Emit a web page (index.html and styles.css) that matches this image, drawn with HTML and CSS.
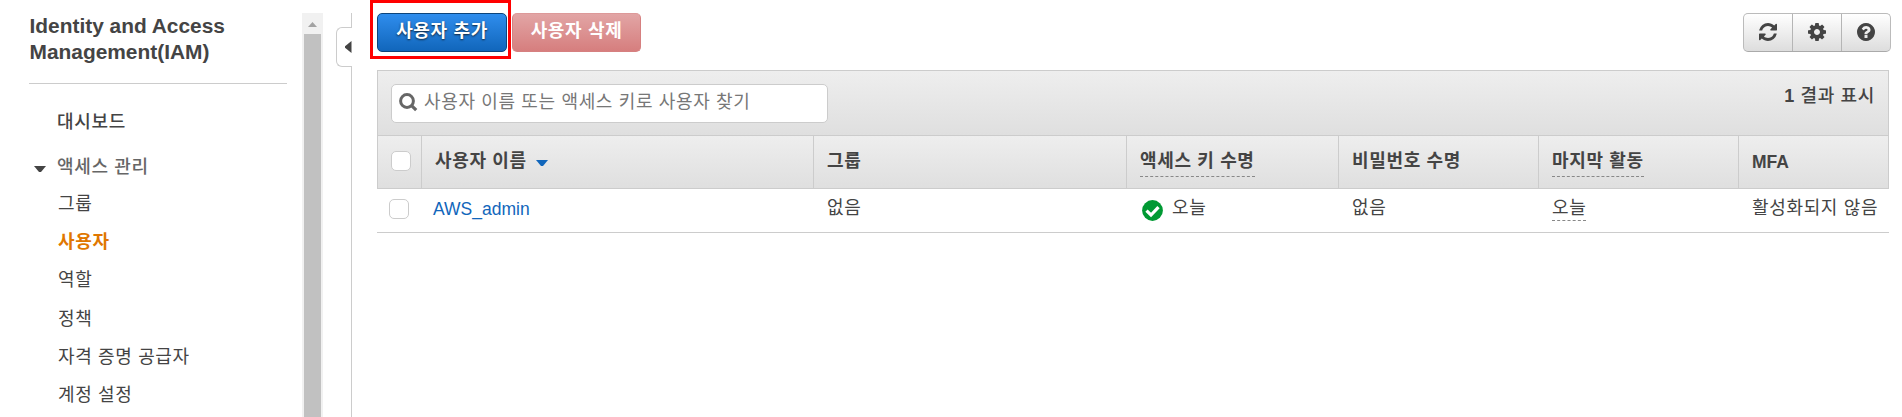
FILE: index.html
```html
<!DOCTYPE html>
<html lang="ko">
<head>
<meta charset="utf-8">
<title>IAM</title>
<link rel="stylesheet" href="styles.css">
</head>
<body>
<div class="app">
  <aside class="sidebar">
    <h1 class="title">Identity and Access Management(IAM)</h1>
    <nav class="nav">
      <a class="dash">대시보드</a>
      <div class="group"><svg class="caret" width="12" height="6" viewBox="0 0 12 6"><path d="M0 0H12L7 6H5Z" fill="#444"/></svg>액세스 관리</div>
      <a class="item">그룹</a>
      <a class="item active">사용자</a>
      <a class="item">역할</a>
      <a class="item">정책</a>
      <a class="item">자격 증명 공급자</a>
      <a class="item">계정 설정</a>
    </nav>
  </aside>
  <div class="scroll">
    <svg width="21" height="21" viewBox="0 0 21 21"><path d="M6 14L10.500 9L15 14Z" fill="#a3a3a3"/></svg>
    <div class="thumb"></div>
  </div>
  <div class="divider">
    <div class="line-top"></div>
    <div class="tab"><svg width="7" height="12" viewBox="0 0 7 12"><path d="M6.500 0V12L0 6.800V5.200Z" fill="#444"/></svg></div>
    <div class="line"></div>
  </div>
  <main class="main">
    <div class="actions">
      <button class="btn primary">사용자 추가<span class="highlight"></span></button>
      <button class="btn danger">사용자 삭제</button>
      <div class="tools">
        <span class="tool"><svg width="18" height="18" viewBox="0 0 1536 1536"><path fill="#444" d="M1511 928q0 5-1 7-64 268-268 434.500T764 1536q-146 0-282.500-55T238 1324l-129 129q-19 19-45 19t-45-19-19-45V960q0-26 19-45t45-19h448q26 0 45 19t19 45-19 45l-137 137q71 66 161 102t187 36q134 0 250-65t186-179q11-17 53-117 8-23 30-23h192q13 0 22.500 9.500t9.500 22.500zm25-800v448q0 26-19 45t-45 19h-448q-26 0-45-19t-19-45 19-45l138-138Q969 256 768 256q-134 0-250 65T332 500q-11 17-53 117-8 23-30 23H50q-13 0-22.500-9.500T18 608v-7q65-268 270-434.500T768 0q146 0 284 55.500T1297 212l130-129q19-19 45-19t45 19 19 45z"/></svg></span>
        <span class="tool"><svg width="18" height="18" viewBox="0 0 1536 1536"><path fill="#444" d="M1024 768q0-106-75-181t-181-75-181 75-75 181 75 181 181 75 181-75 75-181zm512-109v222q0 12-8 23t-20 13l-185 28q-19 54-39 91 35 50 107 138 10 12 10 25t-9 23q-27 37-99 108t-94 71q-12 0-26-9l-138-108q-44 23-91 38-16 136-29 186-7 28-36 28H657q-14 0-24.500-8.500T621 1506l-28-184q-49-16-90-37l-141 107q-10 9-25 9-14 0-25-11-126-114-165-168-7-10-7-23 0-12 8-23 15-21 51-66.500t54-70.500q-27-50-41-99L29 913q-13-2-21-12.500T0 877V655q0-12 8-23t19-13l186-28q14-46 39-92-40-57-107-138-10-12-10-24 0-10 9-23 26-36 98.500-107.500T337 135q13 0 26 10l138 107q44-23 91-38 16-136 29-186 7-28 36-28h222q14 0 24.500 8.500T915 30l28 184q49 16 90 37l142-107q9-9 24-9 13 0 25 10 129 119 165 170 7 8 7 22 0 12-8 23-15 21-51 66.500t-54 70.500q26 50 41 98l183 28q13 2 21 12.500t8 23.500z"/></svg></span>
        <span class="tool"><svg width="18" height="18" viewBox="0 0 1536 1536"><path fill="#444" d="M896 1248v-192q0-14-9-23t-23-9H672q-14 0-23 9t-9 23v192q0 14 9 23t23 9h192q14 0 23-9t9-23zm256-672q0-88-55.500-163T958 297t-170-41q-243 0-371 213-15 24 8 42l132 100q7 6 19 6 16 0 25-12 53-68 86-92 34-24 86-24 48 0 85.500 26t37.500 59q0 38-20 61t-68 45q-63 28-115.500 86.500T640 892v36q0 14 9 23t23 9h192q14 0 23-9t9-23q0-19 21.500-49.500T972 829q32-18 49-28.500t46-35 44.500-48 28-60.500 12.500-81zm384 192q0 209-103 385.500T1153.500 1433 768 1536t-385.500-103T103 1153.500 0 768t103-385.500T382.500 103 768 0t385.500 103T1433 382.500 1536 768z"/></svg></span>
      </div>
    </div>
    <section class="table">
      <div class="filter">
        <label class="search"><svg width="19" height="19" viewBox="0 0 19 19"><circle cx="8" cy="8" r="6.400" fill="none" stroke="#666" stroke-width="3"/><path d="M12.600 12.600L17.200 17.200" stroke="#666" stroke-width="3.200"/></svg><span>사용자 이름 또는 액세스 키로 사용자 찾기</span></label>
        <div class="count"><b>1</b> 결과 표시</div>
      </div>
      <div class="row head">
        <div class="cell check"><i class="box"></i></div>
        <div class="cell">사용자 이름<svg class="sort" width="12" height="6" viewBox="0 0 12 6"><path d="M0 0H12L7 6H5Z" fill="#1166bb"/></svg></div>
        <div class="cell">그룹</div>
        <div class="cell"><span class="dashed">액세스 키 수명</span></div>
        <div class="cell">비밀번호 수명</div>
        <div class="cell"><span class="dashed">마지막 활동</span></div>
        <div class="cell mfa">MFA</div>
      </div>
      <div class="row body">
        <div class="cell check"><i class="box"></i></div>
        <div class="cell user"><a class="link">AWS_admin</a></div>
        <div class="cell">없음</div>
        <div class="cell age"><svg class="ok" width="21" height="21" viewBox="0 0 21 21"><circle cx="10.500" cy="10.500" r="10.400" fill="#093"/><path d="M4.500 10.600L9 15L16.500 7.200" fill="none" stroke="#fff" stroke-width="3.200"/></svg>오늘</div>
        <div class="cell">없음</div>
        <div class="cell"><span class="dashed">오늘</span></div>
        <div class="cell">활성화되지 않음</div>
      </div>
    </section>
  </main>
</div>
</body>
</html>
```
FILE: styles.css
```css
* { box-sizing: border-box; }
body {
  margin: 0;
  background: #fff;
  color: #444;
  font: 18px/26px "Liberation Sans", "Noto Sans CJK KR", sans-serif;
  letter-spacing: .65px;
  overflow: hidden;
}
svg { display: block; flex: none; }
.app { display: flex; height: 417px; padding-top: 13px; }

.sidebar { width: 302px; padding-left: 29px; }
.title {
  width: 258px;
  height: 71px;
  margin: 0;
  padding-left: 0.500px;
  border-bottom: 1px solid #ccc;
  font-size: 20.900px;
  line-height: 26px;
  letter-spacing: 0;
}
.nav { display: flex; flex-direction: column; padding: 25px 0 0 28px; }
.dash { font-weight: 500; height: 45px; line-height: 26px; }
.group { display: flex; align-items: center; height: 26px; margin: 0 0 5px -23px; color: #666; font-weight: 500; }
.caret { margin: 4px 11px 0 0; }
.item { height: 38.200px; padding-left: 1px; line-height: 38.200px; }
.active { color: #e07700; font-weight: 700; }

.scroll { display: flex; flex-direction: column; width: 21px; background: #f1f1f1; }
.thumb { flex: 1; margin: 0 2px; background: #c1c1c1; }

.divider { display: flex; flex-direction: column; align-items: flex-end; width: 29px; }
.line-top { width: 1px; height: 14px; background: #ccc; }
.tab {
  display: flex;
  align-items: center;
  justify-content: flex-end;
  width: 16px;
  height: 40px;
  border: 1px solid #ccc;
  border-right: 0;
  border-radius: 6px 0 0 6px;
}
.line { width: 1px; flex: 1; background: #ccc; }

.main { width: 1514px; margin-left: 25px; }
.actions { display: flex; height: 39px; gap: 5px; }
.btn {
  position: relative;
  width: 130px;
  height: 39px;
  padding: 0 0 4px;
  border: 1px solid #0d457c;
  border-radius: 5px;
  color: #fff;
  font: 700 18px/32px "Liberation Sans", "Noto Sans CJK KR", sans-serif;
  letter-spacing: .65px;
}
.primary { background: linear-gradient(#2f8ded, #1166bb); text-shadow: 0 1px 2px #123; }
.danger { width: 129px; border-color: #d68080; border-top-color: #d99; background: linear-gradient(#e2a5a5, #d67e7e); }
.highlight { position: absolute; left: -8px; top: -14px; width: 141px; height: 59px; border: 3px solid #f00; }
.tools {
  display: flex;
  width: 148px;
  margin-left: auto;
  border: 1px solid #bbb;
  border-bottom-color: #aaa;
  border-radius: 5px;
  background: linear-gradient(#fff, #ddd);
}
.tool { display: flex; flex: 1; justify-content: center; padding-top: 9px; }
.tool + .tool { border-left: 1px solid #b5b5b5; }

.table { width: 1512px; margin-top: 18px; }
.filter {
  display: flex;
  justify-content: space-between;
  height: 65px;
  padding: 13px 13px 0;
  border: 1px solid #ccc;
  border-bottom: 0;
  background: linear-gradient(#eee, #dfdfdf);
}
.search {
  display: flex;
  width: 437px;
  height: 39px;
  padding: 8px 0 0 7px;
  gap: 6px;
  border: 1px solid #ccc;
  border-radius: 5px;
  background: #fff;
  color: #777;
}
.search span { line-height: 18px; }
.count { font-weight: 500; line-height: 25px; }

.row { display: grid; grid-template-columns: 43px 392px 313px 212px 200px 200px 1fr; }
.head { height: 54px; border: 1px solid #ccc; background: linear-gradient(#eee, #dfdfdf); font-weight: 600; }
.head .cell { padding: 12px 0 0 13px; }
.head .cell + .cell { border-left: 1px solid #ccc; }
.head .check { padding-top: 15px; }
.body { height: 44px; border-bottom: 1px solid #ccc; }
.body .cell { padding: 6px 0 0 15px; }
.body .check { padding: 10px 0 0 12px; }
.head .mfa { padding-top: 13px; letter-spacing: 0; font-size: 17.500px; }
.body .user { padding: 7px 0 0 13px; }
.body .age { display: flex; gap: 9px; padding-left: 17px; }
.ok { margin-top: 5px; }
.box { display: block; width: 20px; height: 20px; border: 1px solid #ccc; border-radius: 5px; background: #fff; }
.sort { display: inline-block; margin-left: 9px; vertical-align: 1px; }
.dashed { display: inline-block; height: 29px; border-bottom: 1px dashed #888; }
.body .dashed { height: 26px; }
.link { color: #1166bb; font-size: 17.500px; letter-spacing: 0; }
```
